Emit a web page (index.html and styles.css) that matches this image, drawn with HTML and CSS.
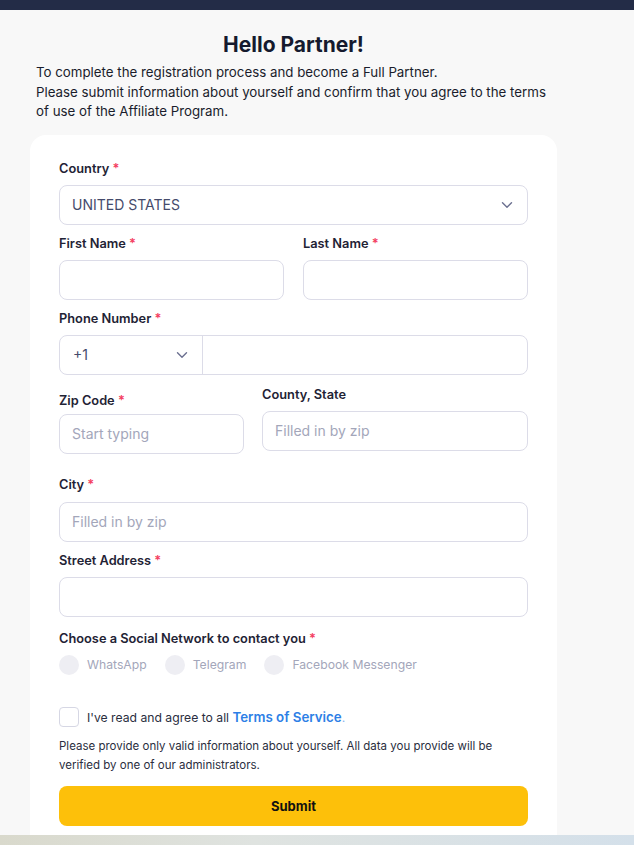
FILE: index.html
```html
<!DOCTYPE html>
<html lang="en">
<head>
<meta charset="utf-8">
<title>Hello Partner!</title>
<link rel="stylesheet" href="styles.css">
</head>
<body>
<div class="topbar"></div>
<main class="page">
  <div class="wrap">
    <h1 class="title">Hello Partner!</h1>
    <p class="intro">To complete the registration process and become a Full Partner.<br>Please submit information about yourself and confirm that you agree to the terms of use of the Affiliate Program.</p>
    <form class="card">
      <div class="field">
        <label class="label">Country <span class="req">*</span></label>
        <div class="input select">
          <span class="value">UNITED STATES</span>
          <svg class="chev" width="12" height="8" viewBox="0 0 12 8"><path d="M1.5 1.8 6 6.2l4.5-4.4" fill="none" stroke="#6b7090" stroke-width="1.4" stroke-linecap="round" stroke-linejoin="round"/></svg>
        </div>
      </div>
      <div class="row two">
        <div class="field">
          <label class="label">First Name <span class="req">*</span></label>
          <div class="input"></div>
        </div>
        <div class="field">
          <label class="label">Last Name <span class="req">*</span></label>
          <div class="input"></div>
        </div>
      </div>
      <div class="field phone-field">
        <label class="label">Phone Number <span class="req">*</span></label>
        <div class="input phone">
          <div class="code">
            <span class="value">+1</span>
            <svg class="chev" width="12" height="8" viewBox="0 0 12 8"><path d="M1.5 1.8 6 6.2l4.5-4.4" fill="none" stroke="#6b7090" stroke-width="1.4" stroke-linecap="round" stroke-linejoin="round"/></svg>
          </div>
          <div class="num"></div>
        </div>
      </div>
      <div class="row zip-row">
        <div class="field zip">
          <label class="label">Zip Code <span class="req">*</span></label>
          <div class="input"><span class="ph">Start typing</span></div>
        </div>
        <div class="field county">
          <label class="label">County, State</label>
          <div class="input"><span class="ph">Filled in by zip</span></div>
        </div>
      </div>
      <div class="field city">
        <label class="label">City <span class="req">*</span></label>
        <div class="input"><span class="ph">Filled in by zip</span></div>
      </div>
      <div class="field street">
        <label class="label">Street Address <span class="req">*</span></label>
        <div class="input"></div>
      </div>
      <div class="field social">
        <label class="label">Choose a Social Network to contact you <span class="req">*</span></label>
        <div class="radios">
          <span class="radio"><span class="dot"></span>WhatsApp</span>
          <span class="radio"><span class="dot"></span>Telegram</span>
          <span class="radio"><span class="dot"></span>Facebook Messenger</span>
        </div>
      </div>
      <div class="agree">
        <span class="box"></span>
        <span class="agree-text">I've read and agree to all <a class="link">Terms of Service</a><span class="period">.</span></span>
      </div>
      <p class="note">Please provide only valid information about yourself. All data you provide will be verified by one of our administrators.</p>
      <button type="button" class="submit">Submit</button>
    </form>
  </div>
</main>
<div class="footer-strip"></div>
</body>
</html>
```
FILE: styles.css
```css
* { box-sizing: border-box; }
html, body { margin: 0; padding: 0; }
body {
  background: #f8f8f8;
  font-family: Inter, "Noto Sans", sans-serif;
  color: #1f2335;
  width: 634px;
  height: 845px;
  overflow: hidden;
}
.topbar { height: 10px; background: #232c47; }
.page { height: 825px; overflow: hidden; }
.wrap { width: 527px; margin-left: 30px; }
.title {
  margin: 22px 0 0;
  font-size: 21px;
  line-height: 26px;
  font-weight: 700;
  text-align: center;
  color: #151a2e;
}
.intro {
  margin: 5px 0 0 6px;
  font-size: 13.3px;
  line-height: 19.5px;
  color: #1a1d2c;
  width: 515px;
}
.card {
  margin-top: 13px;
  background: #fff;
  border-radius: 16px;
  padding: 26px 29px 30px;
}
.field { display: flex; flex-direction: column; }
.label {
  font-size: 12.8px;
  line-height: 16px;
  font-weight: 600;
  color: #1f2335;
  margin-bottom: 8px;
}
.req { color: #f43f62; }
.input {
  height: 40px;
  border: 1px solid #dcdce8;
  border-radius: 8px;
  background: #fff;
  display: flex;
  align-items: center;
  padding: 0 12px;
  font-size: 14px;
}
.value { color: #454b6b; font-size: 14px; }
.select { justify-content: space-between; padding-right: 14px; }
.chev { display: block; }
.ph { color: #a3a6ba; font-size: 14px; }
.row { display: flex; gap: 19px; margin-top: 11px; }
.row.two .field { flex: 1; }
.phone-field { margin-top: 11px; }
.phone { padding: 0; }
.code {
  width: 143px;
  height: 100%;
  border-right: 1px solid #dcdce8;
  display: flex;
  align-items: center;
  justify-content: space-between;
  padding: 0 14px 0 13px;
}
.num { flex: 1; }
.zip-row { margin-top: 12px; gap: 18px; align-items: flex-start; }
.zip { width: 185px; margin-top: 6px; }
.zip .label { margin-bottom: 5px; }
.county { flex: 1; }
.city { margin-top: 23px; }
.city .label { margin-bottom: 9px; }
.street { margin-top: 11px; }
.social { margin-top: 14px; }
.radios { display: flex; gap: 18px; align-items: center; }
.radio {
  display: flex;
  align-items: center;
  gap: 8px;
  font-size: 12.2px;
  color: #a3a6ba;
}
.dot {
  width: 20px; height: 20px; border-radius: 50%;
  background: #eeeef3;
  display: inline-block;
}
.agree {
  margin-top: 32px;
  display: flex;
  align-items: center;
  gap: 8px;
}
.box {
  width: 20px; height: 20px;
  border: 1px solid #d6d7e4;
  border-radius: 4px;
  background: #fff;
}
.agree-text { font-size: 12.2px; color: #2a2e40; }
.link { color: #2d7fe6; font-weight: 600; font-size: 13.3px; text-decoration: none; }
.period { color: #8ab4f0; }
.note {
  margin: 10px 0 0;
  font-size: 11.5px;
  line-height: 19px;
  color: #2a2e40;
}
.submit {
  margin-top: 11px;
  width: 100%;
  height: 40px;
  border: none;
  border-radius: 8px;
  background: #fdc00a;
  font-family: Inter, "Noto Sans", sans-serif;
  font-size: 13px;
  font-weight: 700;
  color: #111;
}
.footer-strip {
  height: 10px;
  background: linear-gradient(90deg, #d9d9cc 0%, #dfe3e0 40%, #d4e0ea 100%);
}
```
